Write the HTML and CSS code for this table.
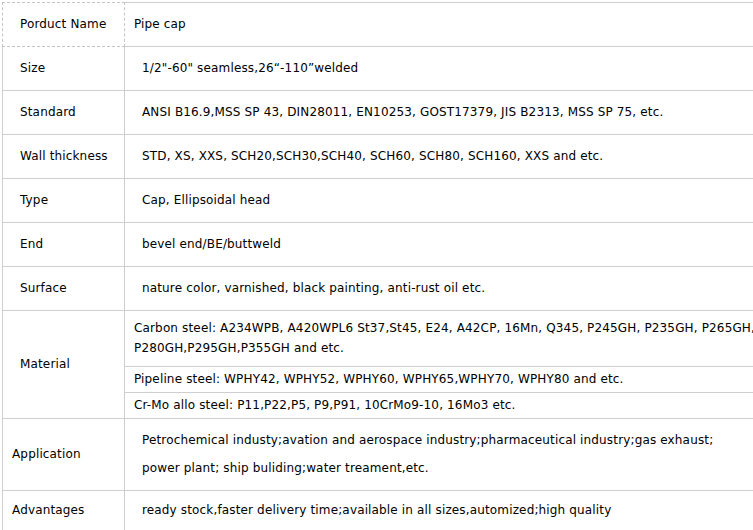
FILE: index.html
```html
<!DOCTYPE html>
<html>
<head>
<meta charset="utf-8">
<link rel="stylesheet" href="styles.css">
</head>
<body>
<table class="spec">
  <tr>
    <td class="key key-first">Porduct Name</td>
    <td class="val val-first">Pipe cap</td>
  </tr>
  <tr>
    <td class="key">Size</td>
    <td class="val">1/2"-60" seamless,26“-110”welded</td>
  </tr>
  <tr>
    <td class="key">Standard</td>
    <td class="val">ANSI B16.9,MSS SP 43, DIN28011, EN10253, GOST17379, JIS B2313, MSS SP 75, etc.</td>
  </tr>
  <tr>
    <td class="key">Wall thickness</td>
    <td class="val">STD, XS, XXS, SCH20,SCH30,SCH40, SCH60, SCH80, SCH160, XXS and etc.</td>
  </tr>
  <tr>
    <td class="key">Type</td>
    <td class="val">Cap, Ellipsoidal head</td>
  </tr>
  <tr>
    <td class="key">End</td>
    <td class="val">bevel end/BE/buttweld</td>
  </tr>
  <tr>
    <td class="key">Surface</td>
    <td class="val">nature color, varnished, black painting, anti-rust oil etc.</td>
  </tr>
  <tr>
    <td class="key key-mat" rowspan="3">Material</td>
    <td class="sub sub-carbon">Carbon steel: A234WPB, A420WPL6 St37,St45, E24, A42CP, 16Mn, Q345, P245GH, P235GH, P265GH,<br>P280GH,P295GH,P355GH and etc.</td>
  </tr>
  <tr>
    <td class="sub">Pipeline steel: WPHY42, WPHY52, WPHY60, WPHY65,WPHY70, WPHY80 and etc.</td>
  </tr>
  <tr>
    <td class="sub">Cr-Mo allo steel: P11,P22,P5, P9,P91, 10CrMo9-10, 16Mo3 etc.</td>
  </tr>
  <tr>
    <td class="key key-narrow">Application</td>
    <td class="val val-app">
      <p>Petrochemical industy;avation and aerospace industry;pharmaceutical industry;gas exhaust;</p>
      <p>power plant; ship buliding;water treament,etc.</p>
    </td>
  </tr>
  <tr>
    <td class="key key-narrow key-adv">Advantages</td>
    <td class="val val-adv">ready stock,faster delivery time;available in all sizes,automized;high quality</td>
  </tr>
</table>
</body>
</html>
```

FILE: styles.css
```css
html, body {
  margin: 0;
  padding: 0;
  background: #fff;
  overflow: hidden;
}

body {
  font-family: "DejaVu Sans", Verdana, sans-serif;
  font-size: 12px;
  letter-spacing: 0.15px;
  color: #000;
}

.spec {
  border-collapse: separate;
  border-spacing: 0;
  margin: 2px 0 0 2px;
  width: 790px;
  table-layout: fixed;
}

.spec td {
  border-right: 1px solid #cfcfcf;
  border-bottom: 1px solid #cfcfcf;
  line-height: 19px;
  padding: 12px 0;
  vertical-align: middle;
  white-space: nowrap;
}

.spec tr:first-child td {
  border-top: 1px solid #cfcfcf;
}

.key {
  width: 104px;
  padding-left: 17px !important;
  border-left: 1px solid #cfcfcf;
}

.key-first {
  border: 1px dashed #c4c4c4 !important;
}

.val {
  padding-left: 17px !important;
}

.val-first {
  padding-left: 9px !important;
}

.sub {
  padding: 3px 0 3px 9px !important;
}

.sub-carbon {
  line-height: 20px !important;
  padding-top: 7px !important;
  padding-bottom: 8px !important;
}

.key-narrow {
  padding-left: 9px !important;
}

.val-app {
  padding-top: 11px !important;
  padding-bottom: 12px !important;
}

.val-app p {
  margin: 0;
  line-height: 20px;
}

.val-app p + p {
  margin-top: 8px;
}

.key-adv,
.val-adv {
  padding-top: 10px !important;
  padding-bottom: 12px !important;
}
```
